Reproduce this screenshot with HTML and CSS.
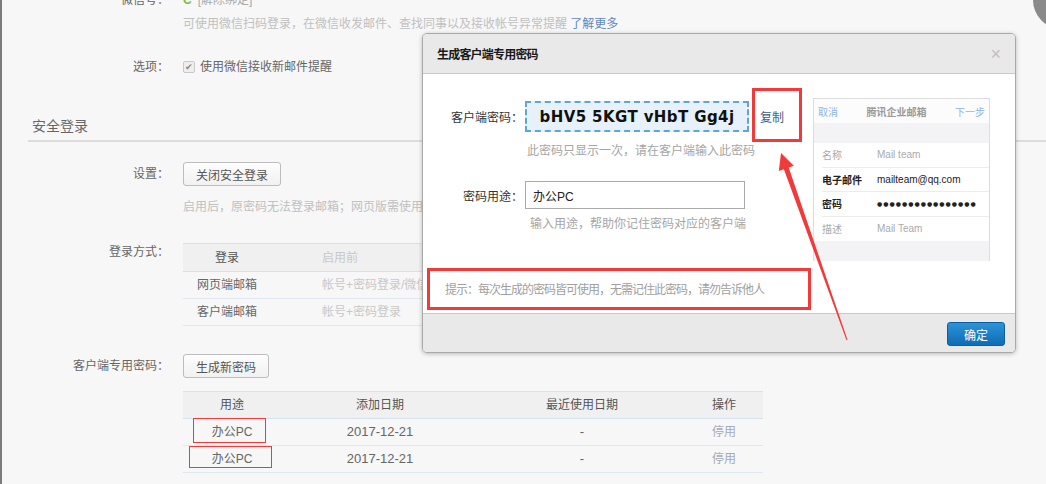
FILE: index.html
```html
<!DOCTYPE html>
<html lang="zh-CN">
<head>
    <meta charset="UTF-8">
    <title>客户端专用密码</title>
    <link rel="stylesheet" href="styles.css">
</head>
<body>
    <div class="page">
        <div class="row wx-row">
            <span class="label">微信号：</span>
            <span class="wx-icon">C</span>
            <span class="muted">[解除绑定]</span>
        </div>
        <div class="row note first-note">
            <span class="label"></span>
            <span>可使用微信扫码登录，在微信收发邮件、查找同事以及接收帐号异常提醒 <a class="link">了解更多</a></span>
        </div>
        <div class="row option-row">
            <span class="label">选项：</span>
            <span class="checkbox">&#10004;</span>
            <span class="option-text">使用微信接收新邮件提醒</span>
        </div>

        <h2 class="section-title">安全登录</h2>

        <div class="row setting-row">
            <span class="label">设置：</span>
            <button class="btn btn-wide">关闭安全登录</button>
        </div>
        <div class="row note second-note">
            <span class="label"></span>
            <span>启用后，原密码无法登录邮箱；网页版需使用微信扫码登录</span>
        </div>

        <div class="row table-row">
            <span class="label">登录方式：</span>
            <table class="grid login-table">
                <tr>
                    <th class="col-type">登录</th>
                    <th class="col-before">启用前</th>
                    <th class="col-after">启用后</th>
                </tr>
                <tr>
                    <td class="col-type">网页端邮箱</td>
                    <td class="col-before">帐号+密码登录/微信扫码</td>
                    <td class="col-after">微信扫码</td>
                </tr>
                <tr>
                    <td class="col-type">客户端邮箱</td>
                    <td class="col-before">帐号+密码登录</td>
                    <td class="col-after">专用密码</td>
                </tr>
            </table>
        </div>

        <div class="row client-row">
            <span class="label">客户端专用密码：</span>
            <button class="btn btn-new">生成新密码</button>
        </div>

        <div class="row">
            <span class="label"></span>
            <table class="grid pwd-table">
                <tr>
                    <th class="c1">用途</th>
                    <th class="c2">添加日期</th>
                    <th class="c3">最近使用日期</th>
                    <th class="c4">操作</th>
                </tr>
                <tr>
                    <td class="c1">办公PC</td>
                    <td class="c2">2017-12-21</td>
                    <td class="c3">-</td>
                    <td class="c4 stop">停用</td>
                </tr>
                <tr>
                    <td class="c1">办公PC</td>
                    <td class="c2">2017-12-21</td>
                    <td class="c3">-</td>
                    <td class="c4 stop">停用</td>
                </tr>
            </table>
        </div>
    </div>

    <div class="scroll-thumb"></div>

    <div class="dialog">
        <div class="dialog-head">
            <span class="dialog-title">生成客户端专用密码</span>
            <span class="close">&#215;</span>
        </div>
        <div class="dialog-body">
            <div class="form">
                <div class="form-row">
                    <span class="form-label">客户端密码：</span>
                    <span class="pwd-box">bHV5 5KGT vHbT Gg4j</span>
                    <a class="copy">复制</a>
                </div>
                <div class="form-hint hint-one">此密码只显示一次，请在客户端输入此密码</div>
                <div class="form-row purpose-row">
                    <span class="form-label">密码用途：</span>
                    <input class="purpose" type="text" value="办公PC">
                </div>
                <div class="form-hint hint-two">输入用途，帮助你记住密码对应的客户端</div>
                <div class="tip">提示：每次生成的密码皆可使用，无需记住此密码，请勿告诉他人</div>
            </div>
            <div class="phone">
                <div class="phone-head">
                    <span class="phone-link">取消</span>
                    <span class="phone-title">腾讯企业邮箱</span>
                    <span class="phone-link">下一步</span>
                </div>
                <div class="phone-band"></div>
                <div class="phone-row dim"><span class="phone-key">名称</span><span>Mail team</span></div>
                <div class="phone-row"><span class="phone-key">电子邮件</span><span>mailteam@qq.com</span></div>
                <div class="phone-row"><span class="phone-key">密码</span><span class="dots">●●●●●●●●●●●●●●●●</span></div>
                <div class="phone-row dim"><span class="phone-key">描述</span><span>Mail Team</span></div>
                <div class="phone-band"></div>
            </div>
        </div>
        <div class="dialog-foot">
            <button class="btn-ok">确定</button>
        </div>
    </div>

    <!-- red annotation marks drawn over the screenshot -->
    <svg class="marks" width="1046" height="484" viewBox="0 0 1046 484">
        <g fill="none" stroke="#f23a3a">
            <rect x="753.5" y="89.5" width="47" height="51" stroke-width="3"/>
            <rect x="428.5" y="269.5" width="381" height="39" stroke-width="3"/>
            <rect x="193.5" y="418.5" width="72" height="24" stroke-width="1"/>
            <rect x="189.5" y="446.5" width="82" height="21" stroke-width="1"/>
        </g>
        <polygon fill="#f23a3a" points="781,153 793.8,165.7 788.7,167.6 847.5,339.8 846.5,340.2 783.9,169.2 778.8,171.1"/>
    </svg>
</body>
</html>
```

FILE: styles.css
```css
* {
    box-sizing: border-box;
}

body {
    margin: 0;
    width: 1046px;
    height: 484px;
    overflow: hidden;
    position: relative;
    background-color: #f7f7f7;
    border-left: 2px solid #7c7c7c;
    font-family: "Liberation Sans", "Noto Sans CJK SC", sans-serif;
    font-size: 12px;
    color: #666;
}

.row {
    display: flex;
    align-items: center;
    line-height: 16px;
}

.label {
    width: 167px;
    flex-shrink: 0;
    text-align: right;
    margin-right: 14px;
    color: #666;
}

.wx-row {
    margin-top: -8px;
    height: 16px;
}

.wx-icon {
    color: #7bc142;
    font-weight: bold;
    margin-right: 6px;
}

.muted {
    color: #aaa;
}

.note {
    color: #c0c0c0;
    white-space: nowrap;
}

.first-note {
    margin-top: 8px;
}

.link {
    color: #5f88bd;
}

.option-row {
    margin-top: 27px;
}

.checkbox {
    width: 12px;
    height: 12px;
    border: 1px solid #c9c9c9;
    border-radius: 2px;
    background-color: #eee;
    color: #888;
    font-size: 9px;
    line-height: 10px;
    text-align: center;
    margin-right: 5px;
}

.option-text {
    color: #666;
}

.section-title {
    margin: 41px 0 0 26px;
    padding: 0 0 4px 4px;
    font-size: 14px;
    font-weight: normal;
    line-height: 20px;
    color: #666;
    border-bottom: 2px solid #dcdcdc;
}

.setting-row {
    margin-top: 20px;
}

.btn {
    height: 24px;
    border: 1px solid #bdbdbd;
    border-radius: 3px;
    background: linear-gradient(#fdfdfd, #f1f1f1);
    font-family: inherit;
    font-size: 12px;
    color: #555;
    padding: 0;
}

.btn-wide {
    width: 98px;
}

.second-note {
    margin-top: 13px;
}

.table-row {
    align-items: flex-start;
    margin-top: 28px;
}

.table-row .label {
    line-height: 18px;
}

.grid {
    border-collapse: collapse;
    width: 580px;
    flex-shrink: 0;
}

.grid th {
    background-color: #f0f0f0;
    border-top: 1px solid #d3e2f1;
    border-bottom: 1px solid #d3e2f1;
    font-weight: normal;
    color: #555;
    padding: 0;
}

.grid td {
    border-bottom: 1px solid #dfe7f0;
    padding: 0;
    white-space: nowrap;
}

.login-table th {
    height: 28px;
}

.login-table td {
    height: 27px;
}

.login-table .col-type {
    width: 88px;
    text-align: center;
}

.login-table .col-before {
    width: 240px;
    text-align: left;
    padding-left: 51px;
    color: #c8c8c8;
}

.login-table th.col-type {
    color: #555;
}

.login-table .col-after {
    text-align: left;
    padding-left: 11px;
}

.client-row {
    margin-top: 28px;
}

.btn-new {
    width: 86px;
    height: 24px;
}

.client-row + .row {
    margin-top: 13px;
}

.pwd-table th {
    height: 27px;
}

.pwd-table td {
    height: 27px;
    text-align: center;
    font-size: 13px;
}

.pwd-table .c1 {
    width: 98px;
    text-align: center;
}

.pwd-table .c2 {
    width: 198px;
}

.pwd-table .c3 {
    width: 206px;
}

.pwd-table td.c1 {
    font-size: 12px;
}

.pwd-table .stop {
    color: #a3aab8;
    font-size: 12px;
}

.scroll-thumb {
    position: absolute;
    left: 1031px;
    top: -29px;
    width: 58px;
    height: 58px;
    border-radius: 50%;
    background-color: #8a8a8a;
}

/* dialog */

.dialog {
    position: absolute;
    left: 420px;
    top: 33px;
    width: 594px;
    height: 320px;
    background-color: #fff;
    border: 1px solid #a9a9a9;
    border-radius: 5px;
    box-shadow: 0 1px 4px rgba(0, 0, 0, 0.25);
    overflow: hidden;
    display: flex;
    flex-direction: column;
}

.dialog-head {
    height: 40px;
    flex-shrink: 0;
    background-color: #e9e9e9;
    border-bottom: 1px solid #c9c9c9;
    display: flex;
    align-items: center;
    justify-content: space-between;
    padding: 0 14px 0 14px;
}

.dialog-title {
    font-weight: bold;
    color: #1a1a1a;
    letter-spacing: -0.8px;
}

.close {
    color: #c0c0c0;
    font-size: 18px;
    line-height: 18px;
}

.dialog-body {
    flex: 1;
    display: flex;
}

.form {
    width: 390px;
    flex-shrink: 0;
    padding-top: 27px;
}

.form-row {
    display: flex;
    align-items: center;
}

.form-label {
    width: 100px;
    text-align: right;
    margin-right: 2px;
    color: #333;
}

.pwd-box {
    width: 224px;
    height: 31px;
    border: 2px dashed #5ea7d4;
    background-color: #e6f1fa;
    font-family: "DejaVu Sans", sans-serif;
    font-weight: bold;
    font-size: 15px;
    letter-spacing: 0.4px;
    color: #111;
    display: flex;
    align-items: center;
    justify-content: center;
}

.copy {
    margin-left: 11px;
    color: #3d5f8c;
}

.form-hint {
    color: #a5a5a5;
    line-height: 16px;
}

.hint-one {
    margin-top: 11px;
    padding-left: 104px;
}

.purpose-row {
    margin-top: 22px;
}

.purpose {
    width: 220px;
    height: 28px;
    border: 1px solid #aaa;
    padding: 0 7px;
    font-family: inherit;
    font-size: 12px;
    color: #222;
}

.hint-two {
    margin-top: 7px;
    padding-left: 107px;
}

.tip {
    margin-top: 50px;
    padding-left: 22px;
    font-size: 12px;
    letter-spacing: -1px;
    line-height: 16px;
    color: #a0a0a0;
    white-space: nowrap;
}

.phone {
    margin-top: 24px;
    width: 177px;
    height: 163px;
    border: 1px solid #ddd;
    background-color: #fff;
    font-size: 10px;
}

.phone-head {
    height: 24px;
    display: flex;
    align-items: center;
    justify-content: space-between;
    padding: 0 4px;
    background-color: #fcfcfc;
}

.phone-link {
    color: #8fb6de;
}

.phone-title {
    color: #9a9a9a;
    font-weight: bold;
}

.phone-band {
    height: 20px;
    background-color: #f3f3f5;
}

.phone-row {
    height: 24.5px;
    margin-left: 8px;
    border-bottom: 1px solid #ececec;
    display: flex;
    align-items: center;
    color: #222;
}

.phone-row:nth-child(6) {
    border-bottom: none;
}

.phone-row.dim {
    color: #aaa;
}

.phone-key {
    width: 55px;
    font-weight: bold;
}

.dim .phone-key {
    font-weight: normal;
}

.dots {
    font-family: "DejaVu Sans", sans-serif;
    font-size: 6px;
    letter-spacing: 1px;
}

.dialog-foot {
    height: 39px;
    flex-shrink: 0;
    background-color: #e9e9e9;
    border-top: 1px solid #c9c9c9;
    display: flex;
    align-items: center;
    justify-content: flex-end;
    padding: 2px 10px 0 0;
}

.btn-ok {
    width: 58px;
    height: 24px;
    border: 1px solid #0c5ea6;
    border-radius: 3px;
    background: linear-gradient(#2e93d6, #0d6cb6);
    color: #fff;
    font-family: inherit;
    font-size: 12px;
    padding: 0;
}

.marks {
    position: absolute;
    left: -2px;
    top: 0;
    pointer-events: none;
}
```
